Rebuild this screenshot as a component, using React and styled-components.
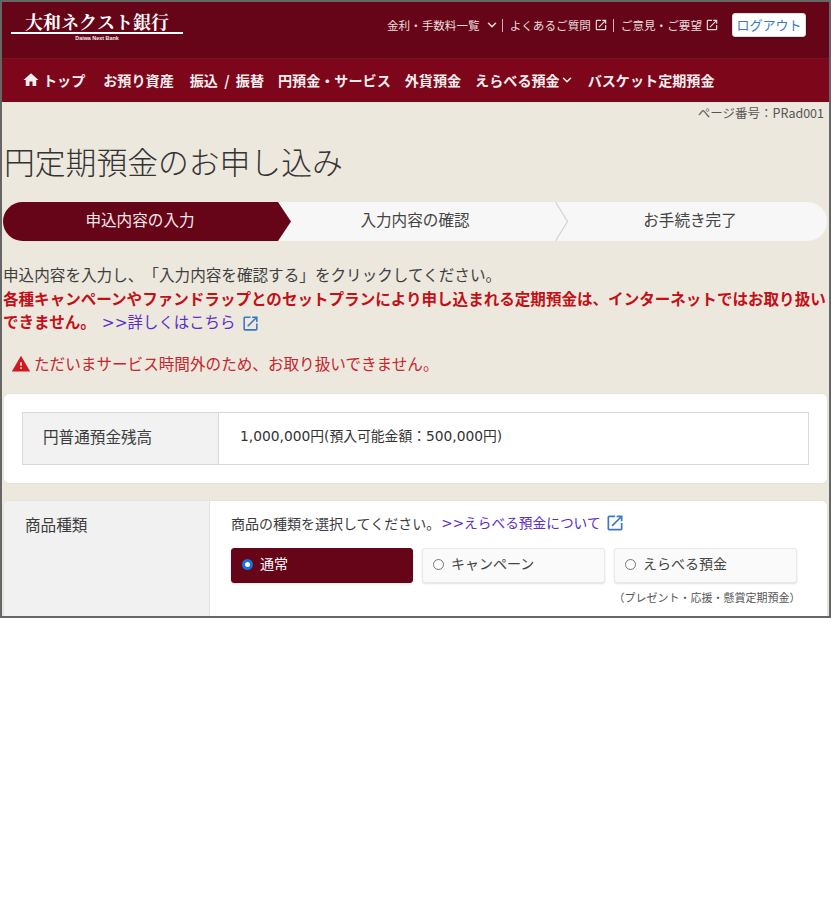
import React from 'react';
import styled, { createGlobalStyle } from 'styled-components';
import { MdHome, MdOpenInNew, MdWarning } from 'react-icons/md';
import { ChevronDown } from 'lucide-react';

const Global = createGlobalStyle`
  html, body { margin: 0; padding: 0; background: #fff; }
  body { font-family: "Noto Sans CJK JP", "Noto Sans", sans-serif; color: #3c3c3c; text-spacing-trim: space-all; }
  * { box-sizing: border-box; }
`;

const Frame = styled.div`
  width: 831px; height: 618px; border: 2px solid #666; overflow: hidden; background: #ede8de;
`;
const TopBar = styled.header`
  height: 57px; background: #670518; display: flex; justify-content: space-between; align-items: flex-start;
  border-bottom: 1px solid #74152a; padding: 11px 23px 0 9px;
`;
const Logo = styled.div`
  width: 172px; color: #fff; text-align: center; line-height: 1;
`;
const LogoName = styled.div`
  font-family: "Noto Serif CJK JP", "Noto Sans CJK JP", serif; font-weight: 700; font-size: 18px; line-height: 17px; height: 21px;
  border-bottom: 2px solid #fff;
`;
const LogoSub = styled.div`
  font-family: "Liberation Sans", sans-serif; font-weight: 700; font-size: 5.4px; line-height: 8px; color: #eee;
`;
const TopLinks = styled.nav`
  display: flex; align-items: center; color: #e6dcdc; font-size: 11.6px; line-height: 24px;
`;
const TopLink = styled.span`
  display: flex; align-items: center; gap: ${p => p.$gap}px; padding-right: ${p => p.$pr || 0}px; white-space: nowrap;
`;
const Separator = styled.span`
  width: 1px; height: 13px; background: #c9b3b7; margin: 0 7px 0 3px;
`;
const LogoutButton = styled.button`
  margin-left: 13px; width: 74px; height: 24px; padding: 0 0 2px; background: #fff; border: 1px solid #ddd; border-radius: 3px;
  color: #3a78c9; font: 400 13px/21px "Noto Sans CJK JP", sans-serif; box-shadow: 0 1px 2px rgba(0,0,0,.3);
`;
const NavBar = styled.nav`
  height: 43px; background: #7d061b; display: flex; align-items: center; padding: 0 0 1px 20px;
  color: #f6eeee; font-size: 14.1px; font-weight: 700; white-space: nowrap;
`;
const NavItem = styled.span`
  display: flex; align-items: center; margin-right: ${p => p.$mr ?? 14}px; word-spacing: ${p => p.$ws || 0}px;
`;
const PageId = styled.div`
  text-align: right; font-size: 12.5px; line-height: 20px; padding: 1px 5px 0 0; color: #555;
`;
const Title = styled.h1`
  margin: 15px 0 0 2px; font-size: 30.8px; font-weight: 300; line-height: 46px; color: #333; white-space: nowrap;
`;
const Stepper = styled.ol`
  list-style: none; margin: 18px 2px 0 1px; padding: 0; height: 39px; display: grid; grid-template-columns: 288px 264px 1fr;
  background: #f7f7f7; border-radius: 20px; overflow: hidden;
`;
const Step = styled.li`
  position: relative; display: flex; align-items: center; justify-content: center; font-size: 15.6px;
  color: ${p => p.$active ? '#f5e8ea' : '#444'};
  background: ${p => p.$active ? '#670518' : 'transparent'};
  clip-path: ${p => p.$active ? 'polygon(0 0, 275px 0, 100% 50%, 275px 100%, 0 100%)' : 'none'};
  padding: 0 ${p => p.$pr || 0}px 6px 0;
`;
const StepChevron = styled.svg`
  position: absolute; right: -14px; top: 0; width: 14px; height: 39px;
`;
const Intro = styled.div`
  margin: 22px 0 0 1px; font-size: 15.6px; line-height: 23.5px; color: #3f3f3f; white-space: nowrap;
`;
const Warn = styled.div`
  font-weight: 700; color: #c40f17; font-size: 15.55px;
`;
const LinkText = styled.span`
  color: #5a2dc8; font-weight: 400; display: inline-flex; align-items: center; gap: ${p => p.$gap}px;
  margin-left: ${p => p.$ml}px;
  font-family: "DejaVu Sans", "Noto Sans CJK JP", sans-serif; font-size: ${p => p.$size}px;
`;
const Alert = styled.div`
  margin: 15px 0 0 9px; display: flex; align-items: center; gap: 3px; color: #c7252c; font-size: 15.6px; line-height: 24px; white-space: nowrap;
`;
const AlertIcon = styled(MdWarning)`
  margin-top: 2px; color: #d0191f;
`;
const Card = styled.section`
  margin: 19px 2px 0 2px; background: #fff; border-radius: 5px; box-shadow: 0 0 2px rgba(0,0,0,.08);
`;
const BalanceCard = styled(Card)`
  padding: 18px; height: 89px;
`;
const BalanceTable = styled.div`
  display: grid; grid-template-columns: 196px 1fr; height: 53px; border: 1px solid #d9d9d9;
`;
const BalanceLabel = styled.div`
  background: #f2f2f2; border-right: 1px solid #d9d9d9; display: flex; align-items: center; padding: 0 0 5px 20px; font-size: 15.6px;
`;
const BalanceValue = styled.div`
  display: flex; align-items: center; padding: 0 0 6px 21px; font-size: 13.8px; color: #333;
  font-family: "DejaVu Sans", "Noto Sans CJK JP", sans-serif;
`;
const FormCard = styled(Card)`
  margin-top: 18px; display: grid; grid-template-columns: 206px 1fr; height: 130px; overflow: hidden;
`;
const FormLabel = styled.div`
  background: #f1f1f1; border-right: 1px solid #e2e2e2; padding: 11px 0 0 21px; font-size: 15.6px; line-height: 24px;
`;
const FormBody = styled.div`
  padding: 10px 0 0 21px;
`;
const Prompt = styled.div`
  display: flex; align-items: center; font-size: 14px; line-height: 24px; white-space: nowrap;
`;
const RadioRow = styled.div`
  display: grid; grid-template-columns: 182px 183px 183px; column-gap: 9px; row-gap: 6px; margin-top: 13px;
`;
const RadioCard = styled.label`
  height: 35px; display: flex; align-items: center; gap: 7px; padding: 0 0 4px 10px; border-radius: 3px; font-size: 14px;
  background: ${p => p.$on ? '#670518' : '#fafafa'};
  color: ${p => p.$on ? '#fff' : '#444'};
  border: 1px solid ${p => p.$on ? '#670518' : '#e8e8e8'};
  box-shadow: 0 1px 2px rgba(0,0,0,.12);
`;
const RadioDot = styled.span`
  width: 11px; height: 11px; border-radius: 50%; margin-top: 3px;
  background: #fff; border: ${p => p.$on ? '3px solid #1273e6' : '1px solid #767676'};
`;
const Note = styled.div`
  grid-column: 3; justify-self: center; font-size: 11px; line-height: 16px; color: #555; white-space: nowrap; margin-left: 3px;
`;

export default function App() {
  return (
    <>
      <Global />
      <Frame>
        <TopBar>
          <Logo>
            <LogoName>大和ネクスト銀行</LogoName>
            <LogoSub>Daiwa Next Bank</LogoSub>
          </Logo>
          <TopLinks>
            <TopLink $gap={5}>金利・手数料一覧<ChevronDown size={14} strokeWidth={2.6} /></TopLink>
            <Separator />
            <TopLink $gap={3} $pr={2}>よくあるご質問<MdOpenInNew size={14} /></TopLink>
            <Separator />
            <TopLink $gap={3}>ご意見・ご要望<MdOpenInNew size={14} /></TopLink>
            <LogoutButton>ログアウト</LogoutButton>
          </TopLinks>
        </TopBar>
        <NavBar>
          <NavItem $mr={18}><MdHome size={18} style={{ marginRight: 3 }} />トップ</NavItem>
          <NavItem $mr={16}>お預り資産</NavItem>
          <NavItem $ws={3}>振込 / 振替</NavItem>
          <NavItem>円預金・サービス</NavItem>
          <NavItem>外貨預金</NavItem>
          <NavItem>えらべる預金<ChevronDown size={14} strokeWidth={2.6} /></NavItem>
          <NavItem>バスケット定期預金</NavItem>
        </NavBar>
        <PageId>ページ番号：PRad001</PageId>
        <Title>円定期預金のお申し込み</Title>
        <Stepper>
          <Step $active $pr={14}>申込内容の入力</Step>
          <Step $pr={16}>
            入力内容の確認
            <StepChevron viewBox="0 0 14 39">
              <path d="M0.5 0 L12.5 19.5 L0.5 39" fill="none" stroke="#d2d2d2" strokeWidth="1.2" />
            </StepChevron>
          </Step>
          <Step $pr={2}>お手続き完了</Step>
        </Stepper>
        <Intro>
          申込内容を入力し、「入力内容を確認する」をクリックしてください。
          <Warn>各種キャンペーンやファンドラップとのセットプランにより申し込まれる定期預金は、インターネットではお取り扱い</Warn>
          <Warn>できません。<LinkText $gap={6} $ml={6} $size={15.4}>&gt;&gt;詳しくはこちら<MdOpenInNew size={19} color="#3b78c4" /></LinkText></Warn>
        </Intro>
        <Alert><AlertIcon size={20} />ただいまサービス時間外のため、お取り扱いできません。</Alert>
        <BalanceCard>
          <BalanceTable>
            <BalanceLabel>円普通預金残高</BalanceLabel>
            <BalanceValue>1,000,000円(預入可能金額：500,000円)</BalanceValue>
          </BalanceTable>
        </BalanceCard>
        <FormCard>
          <FormLabel>商品種類</FormLabel>
          <FormBody>
            <Prompt>
              商品の種類を選択してください。
              <LinkText $gap={4} $ml={1} $size={13.7}>&gt;&gt;えらべる預金について<MdOpenInNew size={20} color="#3b78c4" /></LinkText>
            </Prompt>
            <RadioRow>
              <RadioCard $on><RadioDot $on />通常</RadioCard>
              <RadioCard><RadioDot />キャンペーン</RadioCard>
              <RadioCard><RadioDot />えらべる預金</RadioCard>
              <Note>（プレゼント・応援・懸賞定期預金）</Note>
            </RadioRow>
          </FormBody>
        </FormCard>
      </Frame>
    </>
  );
}
